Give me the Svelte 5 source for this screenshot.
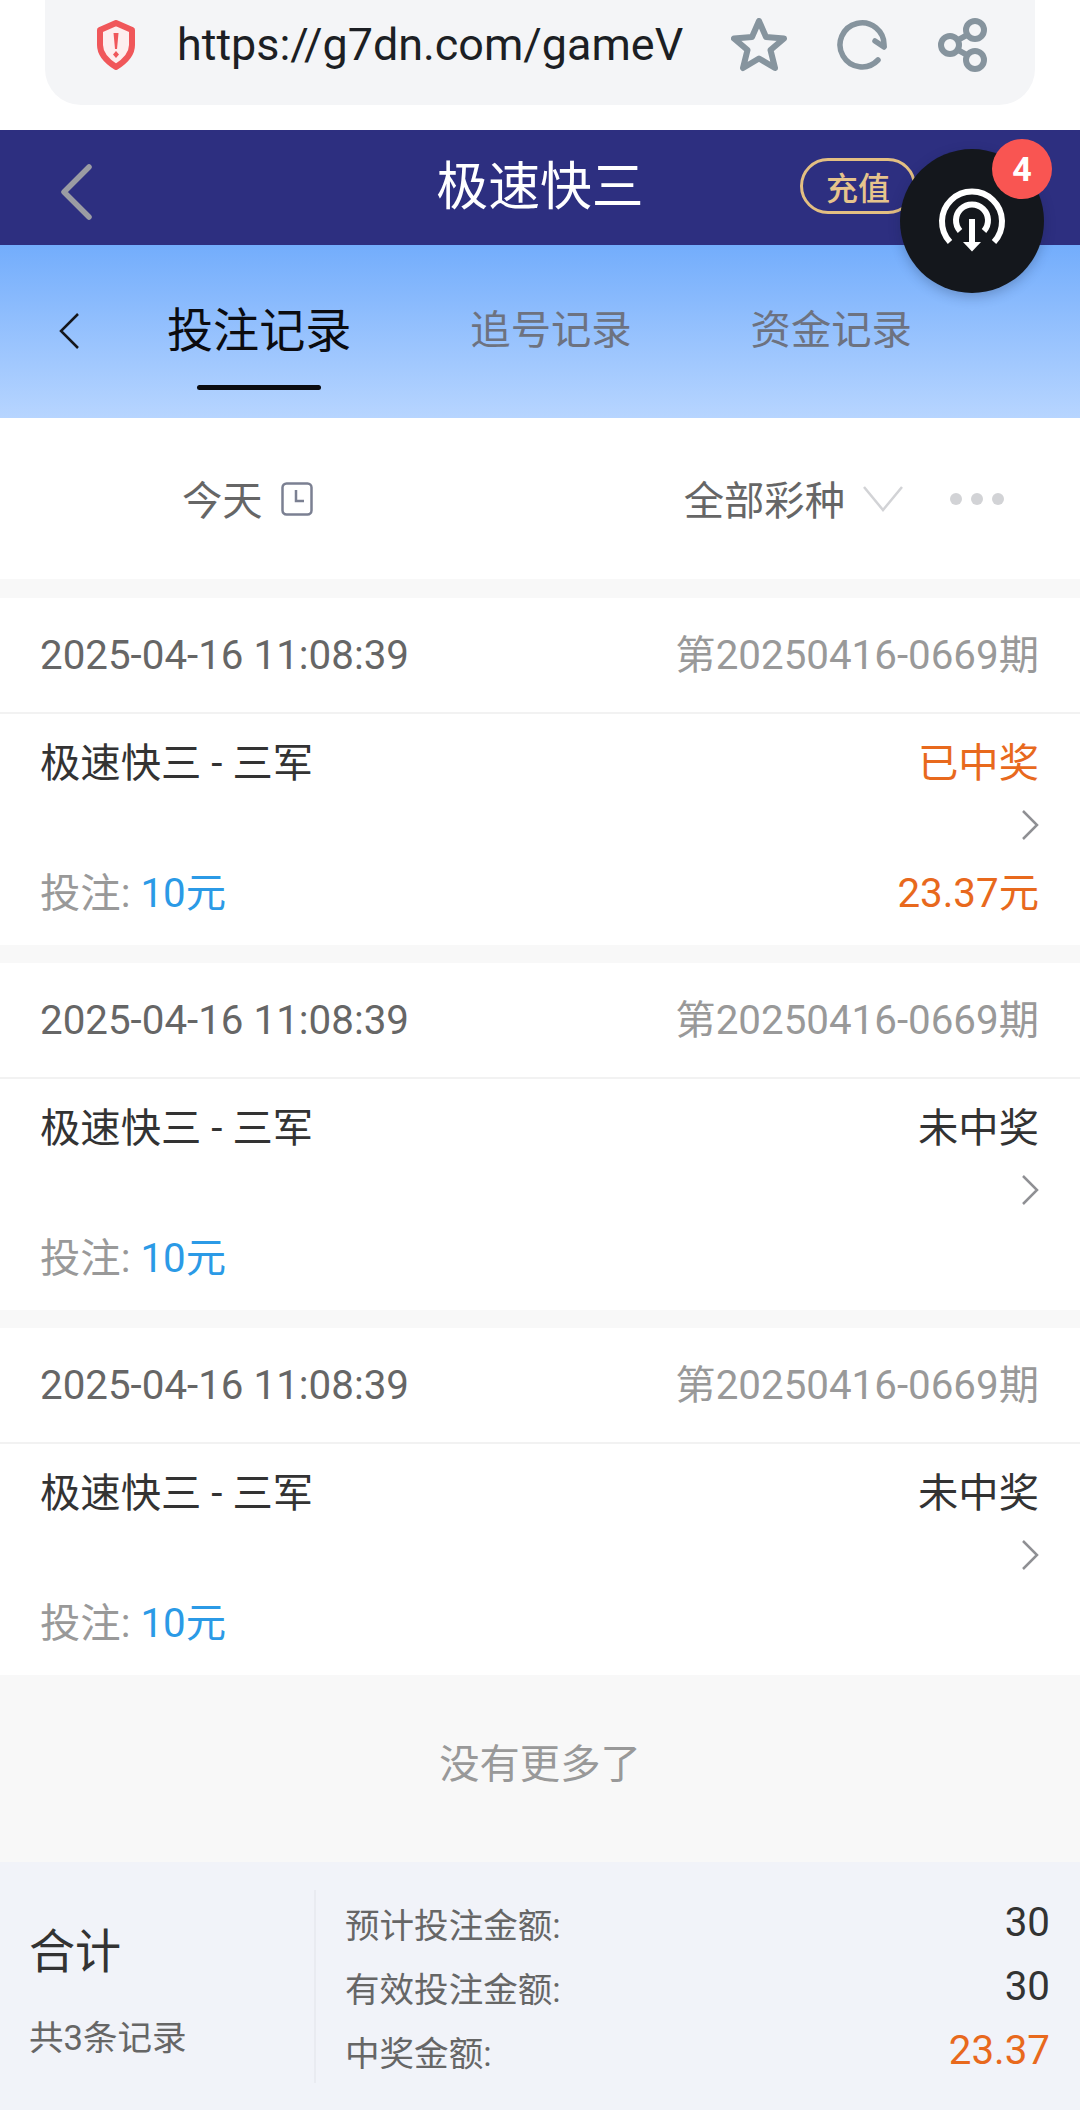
<script lang="ts">
	interface BetRecord {
		time: string;
		period: string;
		game: string;
		status: string;
		won: boolean;
		stake: string;
		payout?: string;
	}

	const tabs = ['投注记录', '追号记录', '资金记录'];

	const records: BetRecord[] = [
		{ time: '2025-04-16 11:08:39', period: '第20250416-0669期', game: '极速快三 - 三军', status: '已中奖', won: true, stake: '10元', payout: '23.37元' },
		{ time: '2025-04-16 11:08:39', period: '第20250416-0669期', game: '极速快三 - 三军', status: '未中奖', won: false, stake: '10元' },
		{ time: '2025-04-16 11:08:39', period: '第20250416-0669期', game: '极速快三 - 三军', status: '未中奖', won: false, stake: '10元' }
	];

	const totals = [
		{ label: '预计投注金额:', value: '30', hot: false },
		{ label: '有效投注金额:', value: '30', hot: false },
		{ label: '中奖金额:', value: '23.37', hot: true }
	];
</script>

<div class="page" lang="zh-CN">
	<!-- 浏览器地址栏 -->
	<div class="browser">
		<div class="address">
			<svg class="shield" viewBox="0 0 40 50" aria-hidden="true">
				<path d="M20 3 L36 10 V25 C36 35 28 42 20 47 C12 42 4 35 4 25 V10 Z" fill="#fdeeee" stroke="#f0575a" stroke-width="6" stroke-linejoin="round" />
				<path d="M17.500 13 H22.500 L21 29 H19 Z" fill="#f0575a" />
				<path d="M20 31 L23 34.500 L20 38 L17 34.500 Z" fill="#f0575a" />
			</svg>
			<span class="url">https://g7dn.com/gameV</span>
			<svg class="tool star" viewBox="0 0 56 54" aria-hidden="true">
				<path d="M28 3 L35 19 L53 20.500 L39.500 32 L44 50 L28 40.500 L12 50 L16.500 32 L3 20.500 L21 19 Z" fill="none" stroke="#86949e" stroke-width="6" stroke-linejoin="round" />
			</svg>
			<svg class="tool reload" viewBox="0 0 50 50" aria-hidden="true">
				<path d="M41 40 A22 22 0 1 1 47 26" fill="none" stroke="#86949e" stroke-width="5.500" stroke-linecap="round" />
				<path d="M38 21 L47 27" fill="none" stroke="#86949e" stroke-width="5.500" stroke-linecap="round" />
			</svg>
			<svg class="tool share" viewBox="0 0 50 54" aria-hidden="true">
				<g fill="none" stroke="#86949e" stroke-width="6">
					<circle cx="37" cy="12" r="9" />
					<circle cx="12" cy="27" r="9" />
					<circle cx="37" cy="42" r="9" />
					<path d="M20 22 L29 17 M20 32 L29 37" />
				</g>
			</svg>
		</div>
	</div>

	<header class="topbar">
		<div class="topbar-left">
			<svg class="back" viewBox="0 0 34 56" aria-hidden="true">
				<path d="M30 3 L5 28 L30 53" fill="none" stroke="#9b9ca3" stroke-width="5.500" stroke-linecap="round" stroke-linejoin="round" />
			</svg>
		</div>
		<h1>极速快三</h1>
		<div class="topbar-right">
			<span class="recharge">充值</span>
		</div>
	</header>

	<!-- 悬浮的下载按钮 -->
	<div class="fab">
		<svg viewBox="0 0 144 144" aria-hidden="true">
			<g fill="none" stroke="#fff" stroke-width="6">
				<path d="M50 93 A30 30 0 1 1 94 93" />
				<path d="M60 82 A16 16 0 1 1 84 82" />
				<path d="M72 70 V95" />
			</g>
			<path d="M63 93 H81 L72 102.500 Z" fill="#fff" />
		</svg>
		<span class="fab-badge">4</span>
	</div>

	<nav class="tabs">
		<svg class="tabs-back" viewBox="0 0 22 38" aria-hidden="true">
			<path d="M20 2 L3 19 L20 36" fill="none" stroke="#15171c" stroke-width="2.500" />
		</svg>
		{#each tabs as tab, i (tab)}
			<div class="tab" class:active={i === 0}>
				<span>{tab}</span>
				<i class="tab-line"></i>
			</div>
		{/each}
	</nav>

	<div class="filters">
		<div class="filter-date">
			<span>今天</span>
			<svg class="calendar" viewBox="0 0 32 34" aria-hidden="true">
				<rect x="1.500" y="1.500" width="29" height="31" rx="4" fill="none" stroke="#7b8092" stroke-width="2.500" />
				<path d="M15 8 V19 H23" fill="none" stroke="#7b8092" stroke-width="2.500" />
			</svg>
		</div>
		<div class="filter-game">
			<span>全部彩种</span>
			<svg class="caret" viewBox="0 0 40 26" aria-hidden="true">
				<path d="M1 1 L20 24 L39 1" fill="none" stroke="#d2d3d6" stroke-width="2.500" />
			</svg>
			<div class="dots"><i></i><i></i><i></i></div>
		</div>
	</div>

	<section class="list">
		{#each records as record, i (i)}
			<article class="card">
				<div class="card-head">
					<span class="time">{record.time}</span>
					<span class="period">{record.period}</span>
				</div>
				<div class="card-body">
					<div class="row">
						<span class="game">{record.game}</span>
						<span class="status" class:won={record.won}>{record.status}</span>
					</div>
					<div class="row-arrow">
						<svg viewBox="0 0 18 32" aria-hidden="true">
							<path d="M2 2 L16 16 L2 30" fill="none" stroke="#8f9094" stroke-width="2.500" />
						</svg>
					</div>
					<div class="row">
						<span class="stake">投注: <b>{record.stake}</b></span>
						{#if record.payout}
							<span class="payout">{record.payout}</span>
						{/if}
					</div>
				</div>
			</article>
		{/each}
	</section>

	<p class="no-more">没有更多了</p>

	<footer class="summary">
		<div class="summary-left">
			<strong>合计</strong>
			<span>共3条记录</span>
		</div>
		<div class="summary-right">
			{#each totals as total (total.label)}
				<div class="total">
					<span class="total-label">{total.label}</span>
					<span class="total-value" class:hot={total.hot}>{total.value}</span>
				</div>
			{/each}
		</div>
	</footer>
</div>

<style>
	:global(body) {
		margin: 0;
		background: #f8f8f8;
	}

	.page {
		position: relative;
		width: 1080px;
		height: 2110px;
		overflow: hidden;
		font-family: Roboto, 'Noto Sans CJK SC', sans-serif;
		background: #f8f8f8;
		color: #333;
	}

	.browser {
		height: 130px;
		padding: 0 45px 25px;
		box-sizing: border-box;
		background: #fff;
	}

	.address {
		display: flex;
		align-items: center;
		height: 105px;
		padding: 0 0 16px 51px;
		box-sizing: border-box;
		background: #f4f5f7;
		border-radius: 0 0 36px 36px;
	}

	.shield {
		width: 40px;
		height: 50px;
		flex: none;
	}

	.url {
		margin-left: 41px;
		width: 505px;
		flex: none;
		font-size: 44.9px;
		line-height: 56px;
		color: #1c1f24;
		white-space: nowrap;
	}

	.tool {
		flex: none;
	}

	.star {
		width: 56px;
		height: 54px;
		margin-left: 49px;
	}

	.reload {
		width: 50px;
		height: 50px;
		margin-left: 50px;
	}

	.share {
		width: 50px;
		height: 54px;
		margin-left: 51px;
	}

	.topbar {
		display: grid;
		grid-template-columns: 1fr auto 1fr;
		align-items: center;
		height: 115px;
		background: #2d2f80;
	}

	.topbar-left {
		padding-left: 59px;
		display: flex;
	}

	.back {
		width: 34px;
		height: 56px;
		margin-top: 8px;
	}

	.topbar h1 {
		margin: 0;
		font-size: 51.84px;
		font-weight: 400;
		line-height: 60px;
		color: #fff;
		padding-top: 1px;
	}

	.topbar-right {
		display: flex;
		justify-content: flex-end;
		padding-right: 164px;
	}

	.recharge {
		display: flex;
		align-items: center;
		justify-content: center;
		width: 116px;
		height: 56px;
		margin-bottom: 3px;
		box-sizing: border-box;
		border: 3.5px solid #e3bf82;
		border-radius: 28px;
		font-size: 32px;
		font-weight: 500;
		color: #e6c48c;
	}

	.fab {
		position: absolute;
		left: 900px;
		top: 149px;
		width: 144px;
		height: 144px;
		border-radius: 50%;
		background: #14171c;
		box-shadow: 0 4px 12px rgb(20 30 60 / 0.25);
	}

	.fab svg {
		display: block;
		width: 144px;
		height: 144px;
	}

	.fab-badge {
		position: absolute;
		left: 92px;
		top: -10px;
		width: 60px;
		height: 60px;
		border-radius: 50%;
		background: #f95552;
		color: #fff;
		font-size: 34px;
		font-weight: 700;
		line-height: 60px;
		text-align: center;
	}

	.tabs {
		display: flex;
		align-items: flex-start;
		height: 173px;
		padding-top: 61px;
		box-sizing: border-box;
		background: linear-gradient(#73adfc, #b7d5ff);
	}

	.tabs-back {
		width: 22px;
		height: 38px;
		margin: 6px 0 0 58px;
		flex: none;
	}

	.tab {
		display: flex;
		flex-direction: column;
		align-items: center;
		margin-left: 119px;
		font-size: 40.32px;
		line-height: 50px;
		color: #6d7280;
	}

	.tab:nth-of-type(1) {
		margin-left: 87px;
		font-size: 46.08px;
		color: #0b0c10;
	}

	.tab-line {
		width: 124px;
		height: 5px;
		margin-top: 29px;
		border-radius: 3px;
	}

	.tab.active .tab-line {
		background: #0b0c10;
	}

	.filters {
		display: flex;
		align-items: center;
		justify-content: space-between;
		height: 161px;
		padding: 6px 76px 0 182px;
		box-sizing: border-box;
		background: #fff;
		font-size: 40.32px;
		line-height: 50px;
		color: #666;
	}

	.filter-date,
	.filter-game {
		display: flex;
		align-items: center;
	}

	.calendar {
		width: 32px;
		height: 34px;
		margin-left: 18px;
		margin-bottom: 5px;
	}

	.caret {
		width: 40px;
		height: 26px;
		margin-left: 18px;
		margin-bottom: 6px;
	}

	.dots {
		display: flex;
		gap: 9px;
		margin-left: 47px;
		margin-bottom: 6px;
	}

	.dots i {
		width: 12px;
		height: 12px;
		border-radius: 50%;
		background: #d2d3d6;
	}

	.list {
		display: flex;
		flex-direction: column;
		gap: 18px;
		padding-top: 19px;
	}

	.card {
		height: 347px;
		background: #fff;
	}

	.card-head {
		display: flex;
		align-items: center;
		justify-content: space-between;
		height: 116px;
		padding: 2px 41px 0 40px;
		box-sizing: border-box;
		border-bottom: 2px solid #f2f2f2;
		font-size: 40.32px;
		line-height: 50px;
	}

	.time {
		color: #666;
	}

	.period {
		color: #999;
	}

	.card-body {
		padding: 26px 41px 0 40px;
		font-size: 40.32px;
		line-height: 48px;
	}

	.row {
		display: flex;
		justify-content: space-between;
		height: 48px;
	}

	.row-arrow {
		display: flex;
		justify-content: flex-end;
		align-items: flex-start;
		height: 82px;
		padding-top: 21px;
		box-sizing: border-box;
	}

	.row-arrow svg {
		width: 18px;
		height: 32px;
	}

	.game {
		color: #333;
	}

	.status {
		color: #333;
	}

	.status.won,
	.payout {
		color: #e8691d;
	}

	.stake {
		color: #999;
	}

	.stake b {
		font-weight: 400;
		color: #2b9ae6;
	}

	.no-more {
		margin: 0;
		height: 187px;
		padding-top: 65px;
		box-sizing: border-box;
		font-size: 40.32px;
		line-height: 50px;
		text-align: center;
		color: #999;
	}

	.summary {
		display: grid;
		grid-template-columns: 314px 1fr;
		height: 248px;
		background: #f1f3f9;
	}

	.summary-left {
		display: flex;
		flex-direction: column;
		padding: 62px 0 0 29px;
	}

	.summary-left strong {
		font-size: 46.08px;
		font-weight: 400;
		line-height: 56px;
		color: #333;
	}

	.summary-left span {
		margin-top: 33px;
		font-size: 34.56px;
		line-height: 50px;
		color: #666;
	}

	.summary-right {
		align-self: start;
		height: 193px;
		margin-top: 28px;
		padding: 0 30px 0 29px;
		border-left: 2px solid #e9ebf1;
	}

	.total {
		display: flex;
		align-items: center;
		justify-content: space-between;
		height: 64px;
	}

	.total-label {
		padding-top: 8px;
		font-size: 34.56px;
		line-height: 48px;
		color: #666;
	}

	.total-value {
		padding-top: 1px;
		font-size: 40.32px;
		line-height: 48px;
		color: #333;
	}

	.total-value.hot {
		color: #e8691d;
	}
</style>
